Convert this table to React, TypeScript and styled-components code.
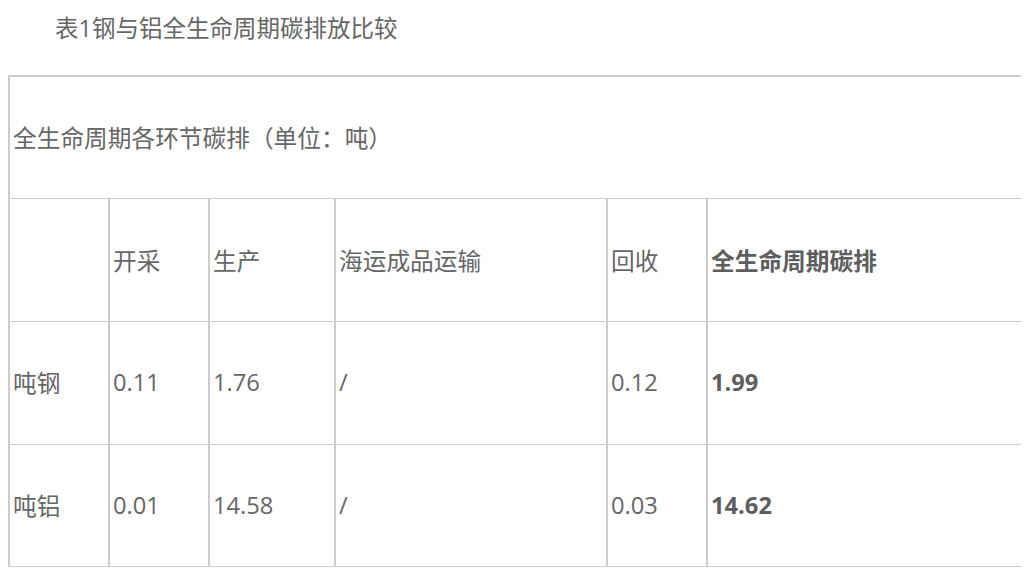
import React from 'react';
import styled, { createGlobalStyle } from 'styled-components';

const GlobalStyle = createGlobalStyle`
    body {
        margin: 8px;
        background: #fff;
        font-family: "Open Sans", "Noto Sans CJK SC", sans-serif;
        color: #666;
    }
`;

const Caption = styled.p`
    margin: 0 0 27px 0;
    line-height: 40px;
    font-size: 23.5px;
    text-indent: 47px;
    color: #666;
`;

const Table = styled.table`
    width: 1015px;
    border-collapse: collapse;
    table-layout: fixed;
    border: 2px solid #ccc;
    border-bottom-width: 1px;
    font-size: 23.7px;
`;

const Row = styled.tr`
    height: 122.7px;
`;

const Cell = styled.td<{ $bold?: boolean }>`
    border: 1px solid #ccc;
    border-left-width: 2px;
    padding: 0 0 1px 3px;
    vertical-align: middle;
    font-weight: ${p => (p.$bold ? 700 : 400)};
    color: ${p => (p.$bold ? '#5e5e5e' : '#666')};
    white-space: nowrap;
`;

const widths = [100, 100, 126, 272, 100, 317];

const rows: string[][] = [
    ['', '开采', '生产', '海运成品运输', '回收', '全生命周期碳排'],
    ['吨钢', '0.11', '1.76', '/', '0.12', '1.99'],
    ['吨铝', '0.01', '14.58', '/', '0.03', '14.62'],
];

export default function App() {
    return (
        <>
            <GlobalStyle />
            <Caption>表1钢与铝全生命周期碳排放比较</Caption>
            <Table>
                <colgroup>
                    {widths.map((w, i) => <col key={i} style={{ width: w }} />)}
                </colgroup>
                <tbody>
                    <Row>
                        <Cell colSpan={6}>全生命周期各环节碳排（单位：吨）</Cell>
                    </Row>
                    {rows.map((r, i) => (
                        <Row key={i}>
                            {r.map((c, j) => (
                                <Cell key={j} $bold={j === 5}>{c}</Cell>
                            ))}
                        </Row>
                    ))}
                </tbody>
            </Table>
        </>
    );
}
